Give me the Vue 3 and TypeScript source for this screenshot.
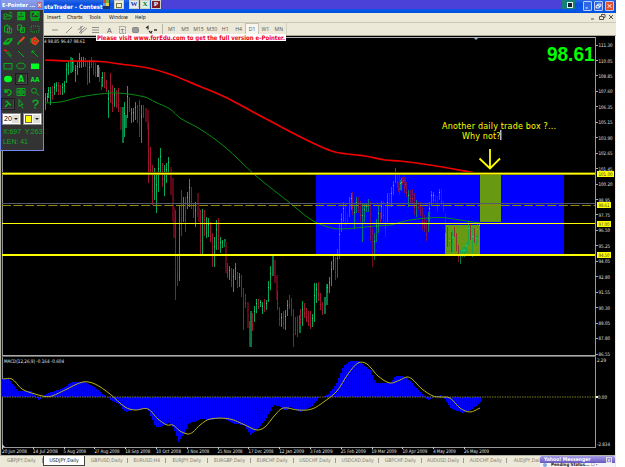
<script setup lang="ts">
/**
 * Trading desktop: daily USDJPY chart with MACD, plus the floating drawing
 * palette. Chart coordinates are window pixels (the svg viewBox starts at y=36).
 */
type Point = [number, number];

const menus = [
  { label: 'Insert', width: 20 },
  { label: 'Charts', width: 22 },
  { label: 'Tools', width: 20 },
  { label: 'Window', width: 26 },
  { label: 'Help', width: 20 },
];
const frames = ['M1', 'M5', 'M15', 'M30', 'H1', 'H4', 'D1', 'W1', 'MN'];
const tabs = [
  'GBPJPY,Daily', 'USDJPY,Daily', 'GBPUSD,Daily', 'EURUSD,H4', 'EURJPY,Daily', 'EURGBP,Daily', 'EURCHF,Daily',
  'USDCHF,Daily', 'USDCAD,Daily', 'GBPCHF,Daily', 'AUDUSD,Daily', 'AUDCHF,Daily', 'AUDJPY,Daily',
];
const dates = [
  '20 Jun 2008', '14 Jul 2008', '5 Aug 2008', '27 Aug 2008', '18 Sep 2008', '10 Oct 2008', '3 Nov 2008', '25 Nov 2008',
  '17 Dec 2008', '12 Jan 2009', '3 Feb 2009', '25 Feb 2009', '19 Mar 2009', '10 Apr 2009', '4 May 2009', '26 May 2009',
];
const prices = [
  '111.30', '110.05', '108.85', '107.60', '106.35', '105.15', '103.90', '102.65', '101.45', '100.20', '98.95',
  '97.75', '96.50', '95.25', '94.05', '92.80', '91.55', '90.30', '89.05', '87.80', '86.55',
];
const levels = [
  { y: 173.5, text: '101.00', w: 17 },
  { y: 204.5, text: '98.61', w: 14 },
  { y: 223.5, text: '97.00', w: 14 },
  { y: 254.5, text: '94.50', w: 14 },
];

// Bars as "x,high,low,direction" in thirds of a pixel, grouped by origin
const segments: { ox: number; oy: number; data: string }[] = [
  {
    ox: 0,
    oy: 40,
    data: `135,160,210,g 141,160,185,g 145,140,175,g 151,140,195,g 157,138,180,r 163,128,165,g 169,125,155,g
    175,125,165,r 181,135,165,r 187,130,165,g 193,122,160,g 199,70,130,g 205,62,105,g 211,50,100,d 217,55,95,g
    221,60,90,r 226,75,125,g 232,65,105,g 238,40,85,g 244,50,85,g 250,50,80,g 256,55,80,r 262,60,135,r 268,60,130,g
    274,50,85,r 280,60,105,r 286,70,110,r 291,75,110,w 297,80,125,r 303,110,150,r 308,95,140,g 314,95,145,r
    319,120,155,r 325,150,233,g 331,98,190,r 337,135,215,r 343,145,200,g 349,150,205,r 355,145,215,r 361,200,270,m
    367,200,308,d 372,185,290,g 377,225,265,d 382,138,235,g 388,172,215,r 394,205,250,g 400,205,245,g 406,185,240,g
    412,195,250,r 418,180,290,r 424,195,308,g 430,195,235,r 436,205,245,m 442,210,270,m 446,245,430,r 452,320,400,r
    458,375,495,r 464,385,480,g 470,395,518,g 476,355,455,g 482,325,405,g 488,370,440,r 494,375,467,g 500,370,430,g
    506,350,400,g 512,380,465,m`,
  },
  {
    ox: 0,
    oy: 190,
    data: `517,-35,95,m 521,50,145,m 526,60,330,r 532,195,287,r 538,45,272,g 544,0,137,r 550,20,95,g 556,20,125,r
    562,5,57,g 568,-32,52,g 574,-10,57,r 580,40,85,r 586,35,110,g 591,10,80,m 596,55,95,m`,
  },
  {
    ox: 200,
    oy: 190,
    data: `1,60,197,r 7,57,195,g 13,60,137,r 19,80,143,g 25,85,140,g 31,95,155,r 37,130,230,r 43,140,230,g 49,90,180,g
    55,85,180,r 61,140,190,g 67,150,175,g 73,148,172,d 77,155,250,m 82,220,265,r 88,228,270,g 94,235,290,r
    100,238,305,g 106,218,270,g 112,245,293,r 118,250,290,g 124,255,320,r 130,295,420,r 136,312,355,r 142,335,415,m
    147,392,470,r 152,362,472,d 157,370,423,r 163,347,395,g 169,327,370,g 175,327,357,r 181,330,352,g 187,335,373,g
    193,328,365,r 199,330,360,g 205,272,335,g 211,228,300,g 217,192,258,d 222,210,280,m 228,255,330,m 233,302,360,r
    238,352,408,r 244,368,410,g 250,362,417,r 256,360,420,g 262,330,378,g 268,315,358,r 274,325,378,r 280,357,472,r
    286,380,435,r 292,378,440,r 297,375,430,d 302,358,405,r 308,333,408,g 314,338,385,r 320,355,395,r 326,362,408,r
    332,362,417,r 338,372,410,g 344,278,395,g 349,280,340,g 355,275,332,r 361,310,360,r 367,335,375,r 373,320,372,d
    378,282,345,d 383,283,310,g 388,260,308,g 394,213,287,g 400,197,240,g 406,200,270,r 412,178,265,g 418,100,207,g
    424,70,125,g 430,37,95,g 436,38,107,r 442,68,100,r 448,20,80,g 453,10,60,g 458,5,75,r 463,45,118,g 469,20,70,g
    475,22,70,r 481,33,97,r 487,43,155,g 493,40,95,g 499,40,65,g 505,28,65,g 511,33,152,r 517,115,232,r
    523,130,210,g 529,88,155,g 535,45,130,g 541,65,103,r 545,33,88,g 550,33,97,r 556,50,140,r 562,10,95,g
    568,10,55,r 574,-10,50,g 580,-27,15,g 586,-65,-20,g 592,-55,-5,r 598,-45,15,r 604,-35,2,g 610,-45,-20,r
    616,-40,-5,r`,
  },
  {
    ox: 400,
    oy: 190,
    data: `-5,-25,5,r 1,-30,0,g 7,-40,-15,r 13,-40,10,r 19,-25,20,r 25,0,50,g 31,0,38,r 37,-2,40,r 43,8,75,r 49,30,80,g
    55,35,60,r 61,35,78,r 67,50,120,r 73,75,125,r 79,90,152,r 84,65,125,g 89,35,95,g 95,2,45,g 101,5,35,g 107,15,35,r
    112,18,65,r 118,-2,30,g 124,-2,52,r 130,32,65,r 136,70,130,r 142,112,170,r 148,142,172,g 154,125,185,r
    158,120,190,g 163,112,140,r 169,130,182,r 175,165,215,r 181,180,222,g 187,170,200,g 193,172,200,g 199,155,190,g
    205,93,165,g 211,100,150,r 217,110,200,g 223,115,160,r 229,135,165,g 233,100,155,g 238,98,120,g`,
  },
];

const colors: Record<string, string> = { g: '#00a858', r: '#9c1230', d: '#08753f', m: '#5c0716', w: '#888888' };

const bars = segments.flatMap((s) =>
  s.data.trim().split(/\s+/).map((item) => {
    const [x, high, low, kind] = item.split(',');
    const top = Math.round(s.oy + Number(high) / 3);
    const bottom = Math.round(s.oy + Number(low) / 3);
    return {
      x: s.ox + Math.floor(Number(x) / 3),
      top,
      height: bottom - top,
      tick: top + Math.round((bottom - top) * (kind === 'g' ? 0.3 : 0.65)),
      kind: kind,
    };
  }),
);

// Catmull-Rom through the given points, as a bezier path
function smooth(list: string): string {
  const p = list.split(' ').map((s) => s.split(',').map(Number) as Point);
  let d = `M${p[0]}`;
  for (let i = 0; i < p.length - 1; i++) {
    const a = p[Math.max(i - 1, 0)];
    const b = p[i];
    const c = p[i + 1];
    const e = p[Math.min(i + 2, p.length - 1)];
    const w = (c[0] - b[0]) / 3;
    const m1 = (c[1] - a[1]) / (c[0] - a[0]);
    const m2 = (e[1] - b[1]) / (e[0] - b[0]);
    d += `C${b[0] + w},${b[1] + w * m1} ${c[0] - w},${c[1] - w * m2} ${c}`;
  }
  return d;
}

const redMa = smooth('45,60 70,61 100,61.5 120,64 148,68 172,75 200,86.5 225,97 255,113 285,129 315,144 335,152 365,156 385,160 400,161 430,165 448,168 478,173.5');
const greenMa = smooth('45,103 60,102 80,97 100,94 118,93 145,97 155,102 170,109 180,118 200,129 225,147 255,175 290,203 310,219 325,226 340,229 375,226 390,225 410,220 440,217.5 460,220 480,223');
const signal = smooth('3,379 12,379 22,389 35,394 45,396.5 52,396 65,390 83,382 95,384 110,394 125,407 135,410 148,409 158,419 167,425 173,425 180,431 188,434 193,432 200,425 210,419 230,419 245,425 257,430 265,427 275,415 283,408 298,410 312,409 325,401 337,391 348,374 358,363 367,364 378,376 390,383 400,380 407,377 412,379 422,389 433,396 440,397 450,398 460,408 470,412 480,408');

const histShape: Point[] = [
  [2, 379], [8, 379], [14, 386], [18, 391], [30, 391], [33, 394], [36, 398], [38, 399.5], [41, 398], [45, 394],
  [60, 389], [72, 382], [85, 382], [95, 388], [105, 396], [110, 400], [117, 403], [125, 412], [133, 410], [147, 409],
  [155, 427], [160, 427], [168, 423], [173, 428], [178, 442], [184, 433], [188, 424], [200, 419], [210, 420],
  [223, 418], [235, 424], [243, 425], [250, 435], [255, 431], [265, 420], [273, 405], [280, 407], [285, 411],
  [290, 407], [300, 412], [312, 406], [318, 398], [327, 395], [335, 385], [343, 366], [350, 361], [358, 361],
  [370, 370], [375, 383], [390, 383], [395, 376], [403, 376], [410, 381], [415, 387], [425, 397], [427, 401],
  [433, 397], [440, 395], [445, 400], [450, 408], [462, 413], [470, 410], [478, 404], [482, 399],
];

function histY(x: number): number {
  const i = histShape.findIndex((p) => p[0] >= x);
  if (i <= 0) return histShape[0][1];
  const [x0, y0] = histShape[i - 1];
  const [x1, y1] = histShape[i];
  return Math.round(y0 + ((y1 - y0) * (x - x0)) / (x1 - x0));
}

const histogram = Array.from({ length: 240 }, (_, i) => {
  const x = 2 + i * 2;
  const y = histY(x);
  return { x, y: Math.min(y, 397), height: Math.abs(y - 397) };
});

const tools = [
  'open', 'save', 'export', 'paste', 'copy', 'select', 'eraser', 'brush', 'fill', 'pencil', 'line', 'arrow',
  'rect', 'ellipse', 'rectFill', 'ellipseFill', 'text', 'text2', 'undo', 'grid', 'zoom', 'lambda', 'cursor', 'help',
];
</script>

<template>
  <div class="desktop">
    <header class="titlebar">
      <span class="title">staTrader - Contest</span>
      <span class="app-mini"><i></i><i></i><i></i><i></i></span>
      <span class="office folder"><b></b></span>
      <span class="gap"></span>
      <span class="office word">W</span>
      <span class="office excel">X</span>
      <span class="office access">P</span>
      <span class="stretch"></span>
      <span class="tray"><i></i></span>
      <span class="win-buttons">
        <svg class="wb" viewBox="0 0 9 9"><path d="M2 7h3" /></svg>
        <svg class="wb" viewBox="0 0 9 9"><path d="M3.500 4V2h4v3h-2M1.500 4h4v3h-4z" /></svg>
        <svg class="wb close" viewBox="0 0 9 9"><path d="M2 2l5 5M7 2l-5 5" /></svg>
      </span>
    </header>

    <nav class="menubar">
      <span v-for="m in menus" :key="m.label" :style="{ width: m.width + 'px' }">{{ m.label }}</span>
      <svg class="mdi" viewBox="0 0 26 8">
        <path d="M2 6h3M12.500 3V1.500h3.500v3h-1.500M10.500 3.500h4v3h-4zM20 2l4 4M24 2l-4 4" />
      </svg>
    </nav>

    <div class="toolbar">
      <svg class="draw-tools" viewBox="0 0 118 13">
        <path d="M8 7h6M22 10l6-6M35 10l6-6M34 7l5-4M37 10l6-5M37 3v8M48 4.500h7M48 7h7M48 9.500h7" />
        <text x="63" y="10">A</text>
        <path class="dotted" d="M75.500 3.500h6v7h-6z" />
        <text x="76.600" y="9.500" class="small">T</text>
        <rect x="88.500" y="4.500" width="6" height="5" rx="1" />
        <path class="thick" d="M102 5l2-1.500v3M105 8l2 2 1-2M110 7h3" />
      </svg>
      <span class="separator"></span>
      <span v-for="f in frames" :key="f" class="frame" :class="{ active: f === 'D1' }">{{ f }}</span>
      <span class="toolbar-end"></span>
    </div>

    <svg class="chart" viewBox="0 36 615 420">
      <rect x="0" y="36" width="615" height="420" fill="#000" />
      <rect x="0" y="36" width="1" height="420" fill="#b8b5a0" />
      <rect x="1" y="36" width="1" height="420" fill="#222" />
      <rect x="2" y="37" width="594" height="1" fill="#b0b0b0" />
      <rect x="2" y="37" width="1" height="411" fill="#8e9298" />
      <text x="44" y="43" textLength="41" lengthAdjust="spacingAndGlyphs" class="tiny">4 98.85 96.47 98.61</text>
      <path d="M473 37h6l-3 3z" fill="#a8b8c8" />

      <rect x="316" y="174" width="248" height="80" fill="#0000ff" />
      <rect x="445" y="225" width="35" height="29" fill="#679a12" />
      <rect x="480" y="174" width="21" height="48" fill="#679a12" />

      <g>
        <template v-for="(b, i) in bars" :key="i">
          <rect
            :x="b.x"
            :y="b.top"
            :width="b.kind === 'd' || b.kind === 'm' || b.kind === 'w' ? 2 : 1"
            :height="b.height"
            :fill="colors[b.kind]"
            :opacity="b.x > 315 && b.top > 167 && b.top < 254 ? 0.72 : 1"
          />
          <rect v-if="b.kind === 'g' || b.kind === 'r'" :x="b.x" :y="b.tick" width="1" height="1" :fill="b.kind === 'g' ? '#25e07e' : '#c01b40'" />
        </template>
      </g>

      <path :d="redMa" class="ma red" />
      <path :d="greenMa" class="ma green" />

      <rect x="2" y="203" width="593" height="1" fill="#535c6c" />
      <path d="M2 205.500H595" stroke="#938806" stroke-dasharray="9 2.600" />
      <rect x="2" y="172" width="593" height="3" fill="#615b00" />
      <rect x="2" y="173" width="593" height="1" fill="#ff0" />
      <rect x="2" y="174" width="593" height="1" fill="#aaa500" />
      <rect x="2" y="223" width="593" height="1" fill="#ff0" />
      <rect x="2" y="254" width="593" height="2" fill="#ff0" />

      <text x="547" y="60.500" textLength="47.500" lengthAdjust="spacingAndGlyphs" class="quote">98.61</text>
      <text x="442" y="128.500" textLength="114" class="note">Another daily trade box ?...</text>
      <text x="462" y="138.500" textLength="38.500" class="note">Why not?</text>
      <rect x="500" y="130" width="1.500" height="10" fill="#b8b8c8" />
      <path d="M490 149v19M479.500 158.500l10.500 10 10-10" class="pointer" />

      <!-- price scale -->
      <rect x="595" y="37" width="1" height="411" fill="#999" />
      <g v-for="(p, i) in prices" :key="p">
        <rect x="596" :y="Math.round(44.5 + i * 15.45)" width="2" height="1" fill="#aaa" />
        <text x="598.500" :y="47.2 + i * 15.43" :textLength="p.length > 5 ? 14 : 11.5" lengthAdjust="spacingAndGlyphs" class="tiny">{{ p }}</text>
      </g>
      <g v-for="l in levels" :key="l.text">
        <rect x="597" :y="l.y - 2.5" :width="l.w" height="6" fill="#ff0" />
        <text x="598.500" :y="l.y + 2.7" :textLength="l.w - 3" lengthAdjust="spacingAndGlyphs" class="tiny dark">{{ l.text }}</text>
      </g>

      <!-- MACD pane -->
      <rect x="2" y="355" width="594" height="1" fill="#aaa" />
      <rect x="2" y="356" width="594" height="1" fill="#666" />
      <text x="4" y="362.800" textLength="60" lengthAdjust="spacingAndGlyphs" class="tiny">MACD(12,26,9) -0.164 -0.604</text>
      <g fill="#0000a0">
        <rect v-for="h in histogram" :key="h.x" :x="h.x" :y="h.y" width="2" :height="h.height" />
      </g>
      <g fill="#0000ff">
        <rect v-for="h in histogram" :key="h.x" :x="h.x" :y="h.y" width="1" :height="h.height" />
      </g>
      <path d="M2 397H595" stroke="#7c7a1c" stroke-dasharray="1.500 1" />
      <path :d="signal" class="signal" />
      <text x="597" y="361.500" textLength="9" lengthAdjust="spacingAndGlyphs" class="tiny">2.29</text>
      <rect x="596" y="396" width="2" height="2" fill="#fff" />
      <text x="598" y="399" textLength="9" lengthAdjust="spacingAndGlyphs" class="tiny">0.00</text>
      <text x="597" y="446" textLength="13" lengthAdjust="spacingAndGlyphs" class="tiny">-2.834</text>
      <path d="M2 444l3 3H2z" fill="#b8d0e8" />

      <!-- time scale -->
      <rect x="2" y="447" width="594" height="1" fill="#999" />
      <g v-for="(d, i) in dates" :key="d">
        <rect :x="Math.round(2 + i * 30.8)" y="447" width="1" height="2" fill="#ccc" />
        <text :x="2 + i * 30.8" y="453.200" :textLength="d.length > 10 ? 25 : 22.5" lengthAdjust="spacingAndGlyphs" class="tiny">{{ d }}</text>
      </g>
      <rect x="0" y="455" width="615" height="1" fill="#b5b2a6" />
    </svg>

    <footer class="tabs">
      <span v-for="t in tabs" :key="t" class="tab" :class="{ active: t.startsWith('USDJPY'), short: t.endsWith('H4') }">{{ t }}</span>
    </footer>

    <svg class="banner" viewBox="0 0 190 7">
      <text x="1" y="5.700" textLength="188" lengthAdjust="spacingAndGlyphs">Please visit www.forEdu.com to get the full version e-Pointer.</text>
    </svg>

    <aside class="palette">
      <div class="palette-title"><span>E-Pointer ...</span><b>×</b></div>
      <div class="palette-grid">
        <span v-for="t in tools" :key="t" class="tool" :class="{ pressed: t === 'text' || t === 'lambda' }">
          <svg viewBox="0 0 12 12">
            <path v-if="t === 'open'" d="M2 9V4h3l1 1h3v1M2 9l2-3h6L8 9zM7 3l2-1 1 2" />
            <path v-else-if="t === 'save'" d="M3 2.500h6.500v7H3zM4.500 2.500V5h3.500V2.500M5 9.500V7.500h3v2" stroke-width="1.400" />
            <path v-else-if="t === 'export'" d="M2 2h8v6H2zM2 10h8M4 6l4-3M5 3h3v3" stroke-width="1.300" />
            <path v-else-if="t === 'paste'" d="M2.500 3h5v6h-5zM4 2h2M5.500 5h4v5h-4z" />
            <path v-else-if="t === 'copy'" d="M2.500 2h4v5h-4zM5.500 4.500h4v5h-4zM6.500 6h2M6.500 8h2" />
            <rect v-else-if="t === 'select'" x="2" y="3" width="8" height="6" stroke-dasharray="1 1" />
            <path v-else-if="t === 'eraser'" d="M2 8l4-4h4L6 8zM2 8v1h4l4-4" stroke-width="1.300" />
            <g v-else-if="t === 'brush'">
              <path d="M9.500 2L5 6.500" stroke="#e8481c" stroke-width="2" />
              <path d="M5 6L2.500 9.500" stroke-width="1.500" />
            </g>
            <g v-else-if="t === 'fill'">
              <path d="M3 4l3-2 4 4-3.500 4L3 8z" fill="#e8281c" stroke="#e85a1c" />
              <path d="M2 3v5M5 6h3" />
            </g>
            <g v-else-if="t === 'pencil'">
              <path d="M4 4l5 5.500M5.500 3l4 5" />
              <path d="M2 2l3 1" stroke="#f01810" stroke-width="1.500" />
            </g>
            <path v-else-if="t === 'line'" d="M3 3l6 6" />
            <path v-else-if="t === 'arrow'" d="M3 3l6 6M3 5.500V3h2.500" />
            <rect v-else-if="t === 'rect'" x="2" y="3.500" width="8" height="5.500" />
            <ellipse v-else-if="t === 'ellipse'" cx="6" cy="6" rx="4.200" ry="2.900" />
            <rect v-else-if="t === 'rectFill'" x="2" y="3.500" width="8" height="5.500" class="solid" />
            <ellipse v-else-if="t === 'ellipseFill'" cx="6" cy="6" rx="4" ry="3.200" class="solid" />
            <text v-else-if="t === 'text'" x="3" y="9.300" font-size="8">A</text>
            <text v-else-if="t === 'text2'" x="1.500" y="9" font-size="7" textLength="9" lengthAdjust="spacingAndGlyphs">AA</text>
            <path v-else-if="t === 'undo'" d="M3 3v3h3M3 6c2-4 7-2 6 1S6 9 5.500 9.500" stroke-width="1.300" />
            <path v-else-if="t === 'grid'" d="M2 2.500h8v7H2zM6 2.500v7M2 6h8M4 4h4v4H4z" />
            <path v-else-if="t === 'zoom'" d="M7 6.500l3 3M2.500 4.700a2.500 2.500 0 1 0 5 0a2.500 2.500 0 1 0-5 0" />
            <path v-else-if="t === 'lambda'" d="M3.500 3.500h1.500L9 7.500M6.500 5.500L3 9" stroke-width="1.500" />
            <path v-else-if="t === 'cursor'" d="M4 1.500v7l2-1.500 2 3.500M4 1.500l4 5H6" />
            <path v-else d="M4 4.500c0-3 5-3 5-.5S6 6 6 8M6 9v1.500" stroke-width="1.500" />
          </svg>
        </span>
      </div>
      <div class="combos">
        <span class="combo"><em>20</em><i></i></span>
        <span class="combo"><u></u><i></i></span>
      </div>
      <div class="status">X:697&nbsp; Y:263</div>
      <div class="status">LEN: 41</div>
    </aside>

    <div class="messenger">
      <div class="messenger-title"><span>Yahoo! Messenger</span><b>×</b></div>
      <div class="messenger-body"><i></i><span>Pending Status... ☐ -</span></div>
    </div>
  </div>
</template>

<style>
body {
  background: #fff;
  overflow: hidden;
}
</style>

<style scoped>
.desktop {
  position: relative;
  display: flex;
  flex-direction: column;
  width: 616px;
  height: 467px;
  overflow: hidden;
  background: #ece9d8;
  font-family: "Open Sans", "DejaVu Sans", sans-serif;
}
.titlebar {
  display: flex;
  flex: none;
  box-sizing: border-box;
  height: 13px;
  padding-left: 44px;
  background: linear-gradient(#2868e8 0, #0a4fdc 4px, #0a58ec 9px, #0050d8 13px);
  color: #fff;
}
.title {
  width: 59px;
  font: bold 6px/13px "DejaVu Sans Condensed", "DejaVu Sans", sans-serif;
  white-space: nowrap;
}
.app-mini {
  display: grid;
  grid-template-columns: 3px 3px;
  grid-template-rows: 3px 3px;
  width: 7px;
  height: 9px;
  background: #17376b;
}
.app-mini i { background: #d44b2c; }
.app-mini i:nth-child(2) { background: #76b545; }
.app-mini i:nth-child(3) { background: #5d9bea; }
.app-mini i:nth-child(4) { background: #e9cc4c; }
.office {
  box-sizing: border-box;
  width: 10px;
  height: 9px;
  margin-right: 1px;
  border: 1px solid #cfd0c8;
  font: bold 7px/7px "Liberation Serif", serif;
  text-align: center;
}
.folder {
  margin: 0 0 0 4px;
  background: #efefdf;
}
.folder b {
  display: block;
  width: 4px;
  height: 3px;
  margin: 2px 1px;
  border: 1px solid #767832;
}
.gap { width: 5px; }
.word { background: #e4ebfa; color: #123c98; }
.excel { background: #dcefdc; color: #187038; }
.access { background: #7e1c20; }
.stretch {
  flex: 1;
  height: 9px;
  background: #4b40d8;
}
.tray {
  width: 13px;
  height: 9px;
  background: #168076;
}
.tray i {
  display: block;
  width: 4px;
  height: 4px;
  margin: 2px 0 0 5px;
  border: 1px solid #e4f0e8;
  background: #123;
}
.win-buttons {
  display: flex;
  gap: 2px;
  padding: 1px 2px 0 8px;
}
.wb {
  box-sizing: border-box;
  width: 9px;
  height: 10px;
  border: 1px solid #b9ccfa;
  border-radius: 1px;
  background: #3068e4;
  fill: none;
  stroke: #fff;
  stroke-width: 1.2;
}
.wb.close { background: #e0502c; }

.menubar {
  display: flex;
  flex: none;
  box-sizing: border-box;
  height: 10px;
  padding-left: 47px;
  border-bottom: 1px solid #cbc8b8;
  color: #111;
  font: 5.3px/9px "DejaVu Sans Condensed", "DejaVu Sans", sans-serif;
}
.mdi {
  width: 26px;
  height: 8px;
  margin-left: auto;
  padding-right: 1px;
  fill: none;
  stroke: #555;
}

.toolbar {
  display: flex;
  flex: none;
  box-sizing: border-box;
  height: 13px;
  padding-left: 44px;
  border-bottom: 1px solid #aaa796;
}
.draw-tools {
  width: 118px;
  height: 13px;
  fill: none;
  stroke: #777;
  stroke-width: 0.8;
}
.draw-tools text {
  fill: #555;
  stroke: none;
  font: 7px "Liberation Sans", sans-serif;
}
.draw-tools .small { font-size: 6px; }
.draw-tools .dotted { stroke-dasharray: 1 0.6; }
.draw-tools .thick { stroke: #333; stroke-width: 1.3; }
.draw-tools rect { fill: #999; }
.separator {
  width: 1px;
  margin: 1px 1px 1px 0;
  border-left: 1px solid #b8b5a5;
}
.frame {
  width: 13.4px;
  color: #555;
  font-size: 5.2px;
  line-height: 12px;
  text-align: center;
}
.frame.active {
  box-sizing: border-box;
  border: 1px solid #c5c2b4;
  background: #f8f7ef;
  line-height: 10px;
}
.toolbar-end {
  border-right: 1px solid #d5d2c2;
}

.chart {
  flex: none;
  width: 615px;
  height: 420px;
}
.tiny {
  fill: #e4e4e4;
  font: 4.9px "DejaVu Sans Condensed", "DejaVu Sans", sans-serif;
}
.tiny.dark { fill: #333; }
.ma {
  fill: none;
  stroke-linejoin: round;
}
.ma.red { stroke: #f00000; stroke-width: 1.7; }
.ma.green { stroke: #078c10; stroke-width: 1; }
.signal { fill: none; stroke: #b8b21c; stroke-width: 1; }
.quote {
  fill: #00ff00;
  font: bold 20px "Liberation Sans", Arial, sans-serif;
}
.note {
  fill: #ff0;
  font: 8px "DejaVu Sans", Verdana, sans-serif;
}
.pointer { fill: none; stroke: #ff0; stroke-width: 1.8; }

.tabs {
  display: flex;
  flex: none;
  height: 11px;
  overflow: hidden;
}
.tab {
  flex: none;
  box-sizing: border-box;
  width: 42.7px;
  height: 10px;
  color: #7c7a6e;
  font: 5px/9px "DejaVu Sans Condensed", "DejaVu Sans", sans-serif;
  text-align: center;
  white-space: nowrap;
  background: linear-gradient(#999, #999) right 2px / 1px 5px no-repeat;
}
.tab.short { width: 37.5px; }
.tab.active {
  border: 1px solid #444;
  border-top: 0;
  background: #fff;
  color: #111;
}

.banner {
  position: absolute;
  left: 96px;
  top: 34px;
  width: 190px;
  height: 7px;
  background: #fff;
  fill: #f00010;
  font: bold 6.2px "DejaVu Sans Condensed", "DejaVu Sans", sans-serif;
}

.palette {
  position: absolute;
  left: 0;
  top: 0;
  box-sizing: border-box;
  width: 44px;
  height: 151px;
  border: 1px solid #7187ee;
  border-top: 0;
  background: #333;
}
.palette-title {
  display: flex;
  align-items: center;
  height: 10px;
  padding: 0 1px;
  background: linear-gradient(#8ba0ec, #6d84dc);
  color: #fff;
  font: bold 5.5px/10px "DejaVu Sans Condensed", sans-serif;
  white-space: nowrap;
}
.palette-title span {
  flex: 1;
}
.palette-title b {
  width: 5px;
  height: 6px;
  background: #c86478;
  font-size: 6px;
  line-height: 5px;
  text-align: center;
}
.palette-grid {
  display: grid;
  grid-template-columns: repeat(3, 13.5px);
  grid-auto-rows: 12.55px;
}
.tool {
  display: flex;
  align-items: center;
  justify-content: center;
}
.tool.pressed { box-shadow: inset 0 0 0 1px #1b1b1b, inset -1px -1px 0 1px #484848; }
.tool svg {
  width: 12px;
  height: 12px;
  fill: none;
  stroke: #05b51b;
  stroke-width: 0.9;
}
.tool .solid { fill: #00ff20; stroke: none; }
.tool text {
  fill: #08df22;
  stroke: none;
  font-family: "DejaVu Sans", sans-serif;
  font-weight: bold;
}
.combos {
  display: flex;
  gap: 2px;
  padding: 3px 1px 0;
}
.combo {
  display: flex;
  box-sizing: border-box;
  width: 19px;
  height: 12px;
  padding: 1px;
  border: 1px solid #888;
  background: #fff;
}
.combo em {
  flex: 1;
  font: normal 7px/8px "Liberation Sans", sans-serif;
}
.combo u {
  flex: 1;
  margin-right: 1px;
  border: 1px solid #765;
  background: #ff0;
}
.combo i {
  position: relative;
  width: 7px;
  background: #e0ded2;
}
.combo i::after {
  content: "";
  position: absolute;
  left: 1.5px;
  top: 3px;
  border: 2px solid transparent;
  border-top-color: #222;
}
.status {
  margin: 3px 0 -1px 2px;
  color: #10ac20;
  font: 6.9px/8px "Liberation Sans", sans-serif;
  white-space: nowrap;
}

.messenger {
  position: absolute;
  left: 540px;
  top: 456px;
  width: 75px;
  height: 11px;
  background: #f4f3f8;
}
.messenger-title {
  display: flex;
  align-items: center;
  height: 7px;
  padding: 0 3px 0 4px;
  border-radius: 2px 2px 0 0;
  background: linear-gradient(#a79de8, #6759c0);
  color: #fff;
  font: bold 5px/7px "DejaVu Sans Condensed", sans-serif;
}
.messenger-title span { flex: 1; }
.messenger-title b {
  width: 4px;
  height: 4px;
  border: 0.5px solid #ddd;
  line-height: 4px;
}
.messenger-body {
  display: flex;
  gap: 4px;
  padding: 0 3px;
  color: #222;
  font: bold 4.4px/4px "DejaVu Sans Condensed", sans-serif;
  white-space: nowrap;
}
.messenger-body i {
  width: 4px;
  height: 4px;
  border-radius: 50%;
  background: #88a8d8;
}
</style>
